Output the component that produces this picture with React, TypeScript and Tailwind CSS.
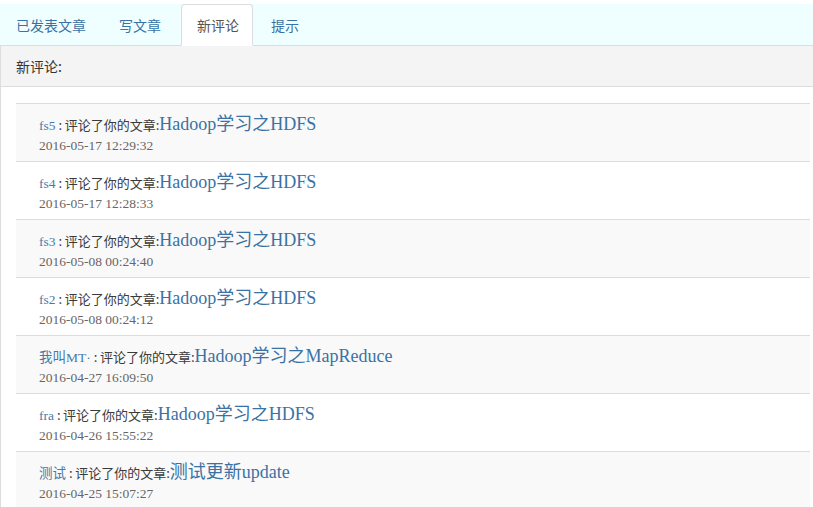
import { memo } from "react";

type Comment = {
  id: number;
  user: string;
  title: string;
  time: string;
};

const comments: Comment[] = [
  { id: 1, user: "fs5", title: "Hadoop学习之HDFS", time: "2016-05-17 12:29:32" },
  { id: 2, user: "fs4", title: "Hadoop学习之HDFS", time: "2016-05-17 12:28:33" },
  { id: 3, user: "fs3", title: "Hadoop学习之HDFS", time: "2016-05-08 00:24:40" },
  { id: 4, user: "fs2", title: "Hadoop学习之HDFS", time: "2016-05-08 00:24:12" },
  { id: 5, user: "我叫MT·", title: "Hadoop学习之MapReduce", time: "2016-04-27 16:09:50" },
  { id: 6, user: "fra", title: "Hadoop学习之HDFS", time: "2016-04-26 15:55:22" },
  { id: 7, user: "测试", title: "测试更新update", time: "2016-04-25 15:07:27" },
];

// slot = tab width + gap to the next tab
const tabs = [
  { label: "已发表文章", slot: "w-[103px]", width: "w-[100px]" },
  { label: "写文章", slot: "w-[78px]", width: "w-[75px]" },
  { label: "新评论", slot: "w-[74px]", width: "w-[72px]", active: true },
  { label: "提示", slot: "w-[72px]", width: "w-[70px]" },
];

const serif = "font-['Liberation_Serif','Noto_Sans_CJK_SC',serif]";
const sans = "font-['Noto_Sans_CJK_SC','Liberation_Sans',sans-serif]";

function Tabs() {
  return (
    <ul className="flex h-[42px] border-b border-[#ddd] bg-[#efffff]">
      {tabs.map((tab) => (
        <li key={tab.label} className={`${tab.slot} -mb-px shrink-0`}>
          <a
            className={`${tab.width} block h-[42px] whitespace-nowrap rounded-t-[4px] border py-[10px] pl-[15px] text-[14px] leading-5 ${sans} ${
              tab.active
                ? "border-[#ddd] border-b-transparent bg-white text-[#555]"
                : "border-transparent text-[#3a72a4]"
            }`}
          >
            {tab.label}
          </a>
        </li>
      ))}
    </ul>
  );
}

function CommentRow({ comment, index }: { comment: Comment; index: number }) {
  return (
    <li
      className={`border-t border-[#ddd] pl-[23px] pt-[8px] pb-[6px] ${
        index % 2 === 0 ? "bg-[#f9f9f9]" : "bg-white"
      }`}
    >
      <div className={`flex h-[25px] items-baseline whitespace-nowrap leading-[24px] ${serif}`}>
        <span className="text-[13.5px] text-[#4a78a8]">{comment.user}</span>
        <span className={`text-[13px] text-[#3a3a3a] ${sans}`}>
          &nbsp;:&thinsp;评论了你的文章:
        </span>
        <a className="text-[18px] text-[#3a72a4]">{comment.title}</a>
      </div>
      <div className={`h-[18px] text-[13.5px] leading-[18px] text-[#666] ${serif}`}>
        {comment.time}
      </div>
    </li>
  );
}

function App() {
  return (
    <div className="h-[507px] w-[813px] overflow-hidden bg-white pt-1">
      <Tabs />
      <div className="w-[826px] border-x border-[#ddd]">
        <div
          className={`flex h-[41px] items-center border-b border-[#ddd] bg-[#f4f4f4] px-[15px] text-[14px] text-[#333] ${sans}`}
        >
          新评论:
        </div>
        <div className="px-[15px] pt-[16px]">
          <ul>
            {comments.map((c, i) => (
              <CommentRow key={c.id} comment={c} index={i} />
            ))}
          </ul>
        </div>
      </div>
    </div>
  );
}

export default memo(App);
